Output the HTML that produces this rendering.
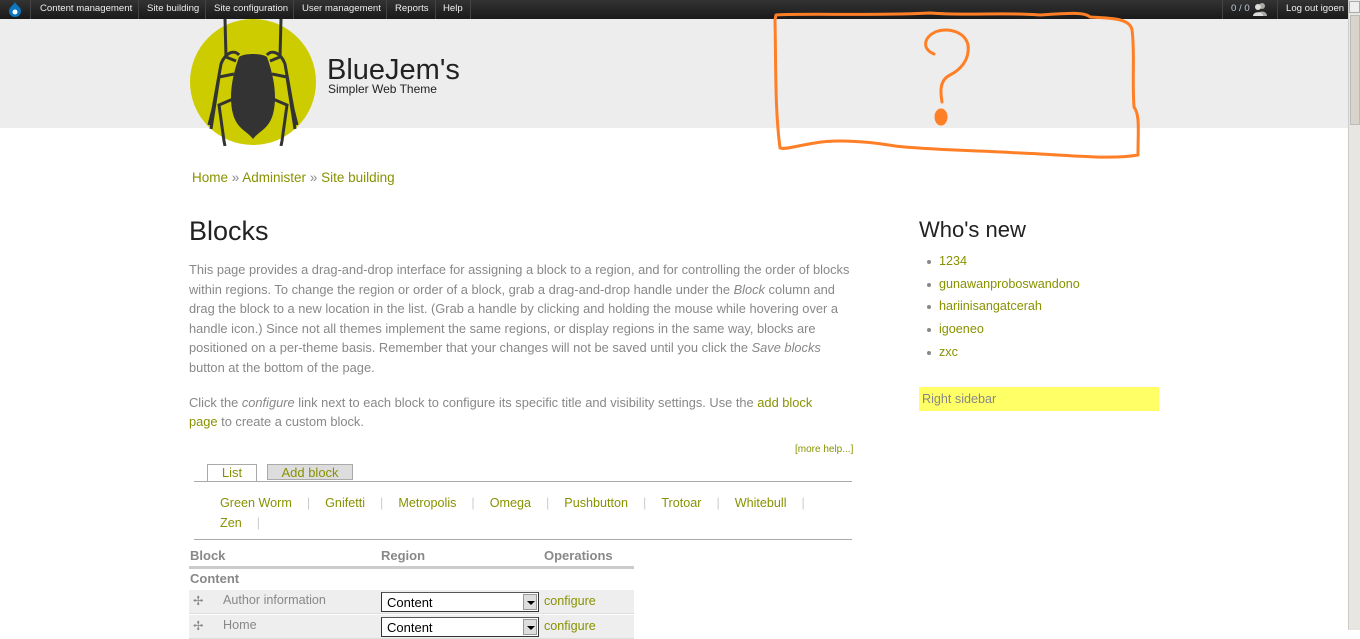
<!DOCTYPE html>
<html><head><meta charset="utf-8"><style>
*{margin:0;padding:0;box-sizing:border-box}
body{width:1360px;height:630px;overflow:hidden;background:#fff;font-family:"Liberation Sans",Arial,sans-serif;position:relative;color:#888}
a{color:#889200;text-decoration:none}
.abs{position:absolute}
#bar{left:0;top:0;width:1348px;height:19px;background:linear-gradient(#333,#1a1a1a);font-size:9.6px;color:#eee;white-space:nowrap}
#bar span{position:absolute;top:3px}
.sep{position:absolute;top:0;width:1px;height:19px;background:#444}
#hdr{left:0;top:19px;width:1348px;height:109px;background:#ededed}
#sb{left:1348px;top:0;width:12px;height:630px;background:#e8e6e0;border-left:1px solid #ccc}
p.t{font-size:12.85px;line-height:19.6px;white-space:nowrap}
.tabs a{font-size:12.6px}
.tabs span{color:#ccc;margin:0 15px}
.th{font-size:13px;font-weight:bold;color:#888}
.sel{position:absolute;width:158px;height:20px;border:1px solid #333;border-top-color:#555;background:#fff;font-size:13px;color:#000;padding:2px 5px}
.sel i{position:absolute;right:1px;top:1px;width:14px;height:16px;background:#ddd;border:1px solid #999}
.sel i:after{content:"";position:absolute;left:3px;top:6px;border:4px solid transparent;border-top:4px solid #000}
.row{position:absolute;left:189px;width:445px;height:24px;background:#eee;border-bottom:1px solid #ddd;font-size:12.6px}
ul li{font-size:12.6px;height:22.7px;list-style:none;position:relative;padding-left:20px}
ul li:before{content:"";position:absolute;left:8px;top:6px;width:4px;height:4px;border-radius:2px;background:#888}
</style></head><body>
<div id="bar" class="abs">
<svg class="abs" style="left:8px;top:2px" width="14" height="15" viewBox="0 0 14 15"><path d="M7 0 C8 3 13 5 13 9 A6 6 0 0 1 1 9 C1 5 6 3 7 0Z" fill="#0b78c1"/><circle cx="7" cy="10" r="2.5" fill="#fff"/></svg>
<div class="sep" style="left:30px"></div>
<span style="left:40px">Content management</span><div class="sep" style="left:138px"></div>
<span style="left:147px">Site building</span><div class="sep" style="left:205px"></div>
<span style="left:214px">Site configuration</span><div class="sep" style="left:293px"></div>
<span style="left:302px">User management</span><div class="sep" style="left:386px"></div>
<span style="left:395px">Reports</span><div class="sep" style="left:435px"></div>
<span style="left:443px">Help</span><div class="sep" style="left:470px"></div>
<div class="sep" style="left:1222px"></div>
<span style="left:1231px;color:#bcd">0 / 0</span>
<svg class="abs" style="left:1252px;top:2px" width="16" height="14"><circle cx="10" cy="4" r="3" fill="#aaa"/><path d="M5 14 C5 8 15 8 15 14Z" fill="#aaa"/><circle cx="6" cy="5" r="3" fill="#ddd"/><path d="M1 14 C1 9 11 9 11 14Z" fill="#ddd"/></svg>
<div class="sep" style="left:1277px"></div>
<span style="left:1286px">Log out igoen</span>
</div>
<div id="hdr" class="abs"></div>
<svg class="abs" style="left:189px;top:19px" width="128" height="127" viewBox="0 0 128 127">
<circle cx="64" cy="63" r="63" fill="#cccc00"/>
<g stroke="#333" stroke-width="3" fill="none">
<path d="M36 0 L37 38 L47 42 M50 36 C45 30 36 34 32 45 L24 90 L20 106"/>
<path d="M92 0 L91 38 L81 42 M78 36 C83 30 92 34 96 45 L104 90 L108 106"/>
<path d="M45 55 L30 58 L22 110 M83 55 L98 58 L106 110"/>
<path d="M44 80 L30 86 L35 122 L36 127 M84 80 L98 86 L93 122 L92 127"/>
</g>
<path d="M50 38 C55 34 73 34 78 38 C86 60 88 80 84 95 C80 110 70 112 64 120 C58 112 48 110 44 95 C40 80 42 60 50 38Z" fill="#333"/>
</svg>
<div class="abs" style="left:327px;top:54px;font-size:29px;color:#222">BlueJem's</div>
<div class="abs" style="left:328px;top:82px;font-size:12px;color:#222">Simpler Web Theme</div>
<svg class="abs" style="left:770px;top:10px" width="380" height="160" viewBox="0 0 380 160" fill="none" stroke="#ff7f27" stroke-width="3" stroke-linecap="round" stroke-linejoin="round">
<path d="M6 5 C40 3 100 6 160 3 C200 6 230 2 270 5 C300 3 315 2 320 7 C340 8 360 8 362 20 C365 40 362 70 364 97 C370 105 368 120 368 145 C340 150 300 145 250 143 C200 140 160 140 125 136 C90 130 60 130 45 133 C30 135 15 140 10 138 C5 100 6 60 5 10Z"/>
<path d="M164 44 C150 38 155 25 168 21 C180 18 195 22 198 35 C200 50 190 60 180 65 C170 70 170 80 172 92"/>
<ellipse cx="171" cy="107" rx="5" ry="7" fill="#ff7f27"/>
</svg>
<div class="abs" style="left:192px;top:170px;font-size:13.5px"><a>Home</a> » <a>Administer</a> » <a>Site building</a></div>
<div class="abs" style="left:189px;top:216px;font-size:27px;color:#222">Blocks</div>
<div class="abs" style="left:189px;top:260px;width:670px">
<p class="t">This page provides a drag-and-drop interface for assigning a block to a region, and for controlling the order of blocks<br>within regions. To change the region or order of a block, grab a drag-and-drop handle under the <i>Block</i> column and<br>drag the block to a new location in the list. (Grab a handle by clicking and holding the mouse while hovering over a<br>handle icon.) Since not all themes implement the same regions, or display regions in the same way, blocks are<br>positioned on a per-theme basis. Remember that your changes will not be saved until you click the <i>Save blocks</i><br>button at the bottom of the page.</p>
<p class="t" style="margin-top:15px">Click the <i>configure</i> link next to each block to configure its specific title and visibility settings. Use the <a>add block</a><br><a>page</a> to create a custom block.</p>
</div>
<div class="abs" style="left:795px;top:444px;font-size:10px"><a>[more help...]</a></div>
<div class="abs" style="left:207px;top:464px;width:50px;height:17px;border:1px solid #aaa;border-bottom:none;background:#fff;text-align:center;font-size:13px;line-height:16px"><a>List</a></div>
<div class="abs" style="left:267px;top:464px;width:86px;height:16px;border:1px solid #aaa;background:#ddd;text-align:center;font-size:13px;line-height:15px"><a>Add block</a></div>
<div class="abs" style="left:194px;top:481px;width:658px;height:1px;background:#aaa"></div>
<div class="abs tabs" style="left:220px;top:493px;font-size:12.6px;line-height:20px;width:640px">
<a>Green Worm</a><span>|</span><a>Gnifetti</a><span>|</span><a>Metropolis</a><span>|</span><a>Omega</a><span>|</span><a>Pushbutton</a><span>|</span><a>Trotoar</a><span>|</span><a>Whitebull</a><span>|</span><br><a>Zen</a><span>|</span></div>
<div class="abs" style="left:194px;top:539px;width:658px;height:1px;background:#aaa"></div>
<div class="abs th" style="left:190px;top:548px">Block</div>
<div class="abs th" style="left:381px;top:548px">Region</div>
<div class="abs th" style="left:544px;top:548px">Operations</div>
<div class="abs" style="left:189px;top:566px;width:445px;height:3px;background:#ccc"></div>
<div class="abs th" style="left:190px;top:571px">Content</div>
<div class="row" style="top:590px"><span class="abs" style="left:4px;top:3px">✢</span><span class="abs" style="left:34px;top:3px">Author information</span></div>
<div class="sel" style="left:381px;top:592px">Content<i></i></div>
<a class="abs" style="left:544px;top:594px;font-size:12.6px">configure</a>
<div class="row" style="top:615px"><span class="abs" style="left:4px;top:3px">✢</span><span class="abs" style="left:34px;top:3px">Home</span></div>
<div class="sel" style="left:381px;top:617px">Content<i></i></div>
<a class="abs" style="left:544px;top:619px;font-size:12.6px">configure</a>
<div class="abs" style="left:919px;top:217px;font-size:22px;color:#222">Who's new</div>
<ul class="abs" style="left:919px;top:254px"><li><a>1234</a></li><li><a>gunawanproboswandono</a></li><li><a>hariinisangatcerah</a></li><li><a>igoeneo</a></li><li><a>zxc</a></li></ul>
<div class="abs" style="left:919px;top:387px;width:240px;height:24px;background:#ffff66;font-size:12.6px;padding:5px 3px;color:#888">Right sidebar</div>
<div id="sb" class="abs"><div style="position:absolute;top:1px;left:0;width:11px;height:12px;background:#eee;border:1px solid #aaa"></div><div style="position:absolute;top:15px;left:1px;width:10px;height:110px;background:#d8d4cc;border:1px solid #bbb"></div></div>
</body></html>
